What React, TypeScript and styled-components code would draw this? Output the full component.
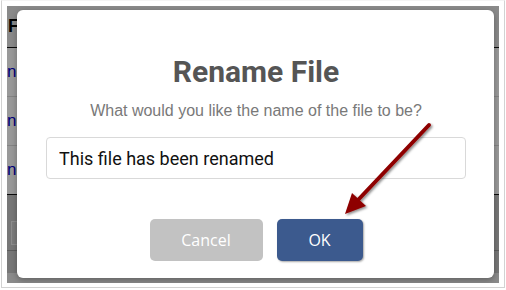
import React from 'react';
import styled, { createGlobalStyle } from 'styled-components';

const Global = createGlobalStyle`
  html, body { margin: 0; padding: 0; background: #ffffff; }
  body { width: 506px; height: 290px; overflow: hidden; }
  * { box-sizing: border-box; }
`;

const Frame = styled.div`
  position: relative;
  width: 506px;
  height: 290px;
  background: #ffffff;
  padding: 0 1px 2px 1px;
`;

const Shot = styled.div`
  width: 504px;
  height: 288px;
  border: 1px solid #d2d2d2;
  border-top-color: #f4f4f4;
  padding: 5px 4px 4px 5px;
`;

const Screen = styled.div`
  position: relative;
  width: 492px;
  height: 277px;
  overflow: hidden;
  background: #ffffff;
  display: flex;
  flex-direction: column;
`;

const TableHead = styled.div`
  height: 42px;
  flex: none;
  background: #e6e6e6;
  border-bottom: 1px solid #111;
  display: flex;
  align-items: center;
  padding-left: 1px;
  font: 700 18px "Liberation Sans", Arial, sans-serif;
  color: #000;
`;

const Row = styled.div<{ $last?: boolean }>`
  height: 49px;
  flex: none;
  border-bottom: 1px solid ${(p) => (p.$last ? '#111' : '#dddddd')};
  display: flex;
  align-items: center;
  font: 400 17px "Liberation Sans", Arial, sans-serif;
  color: #0000cc;
`;

const Footer = styled.div`
  flex: 1;
  background: #c6c6c6;
  display: flex;
  flex-direction: column;
`;

const FooterInput = styled.div`
  margin: 26px 0 0 4px;
  width: 200px;
  height: 24px;
  border: 1px solid #ececec;
  background: #cfcfcf;
`;

const FooterRule = styled.div`
  margin-top: 5px;
  height: 1px;
  background: #9a9a9a;
`;

const FooterBand = styled.div`
  margin-top: auto;
  height: 10px;
  background: #e8e8e8;
`;

const Overlay = styled.div`
  position: absolute;
  inset: 0;
  background: rgba(0, 0, 0, 0.4);
  padding: 4px 5px 5px 10px;
  display: flex;
`;

const Dialog = styled.div`
  width: 477px;
  height: 268px;
  background: #ffffff;
  border-radius: 6px;
  box-shadow: 0 2px 6px rgba(0, 0, 0, 0.3);
  padding: 46px 28px 17px 29px;
  display: flex;
  flex-direction: column;
  align-items: center;
`;

const Title = styled.h1`
  margin: 0;
  font: 700 30px/32px Roboto, "Liberation Sans", sans-serif;
  color: #555555;
`;

const Subtitle = styled.p`
  margin: 13px 0 0;
  font: 400 16px/20px "Liberation Sans", Arial, sans-serif;
  color: #797979;
`;

const NameInput = styled.input`
  margin-top: 16px;
  width: 420px;
  height: 42px;
  border: 1px solid #d9d9d9;
  border-radius: 4px;
  padding: 0 12px;
  font: 400 18px Roboto, "Liberation Sans", sans-serif;
  color: #111111;
  background: #ffffff;
  outline: none;
`;

const Buttons = styled.div`
  margin-top: 40px;
  display: flex;
  gap: 14px;
  justify-content: center;
`;

const Button = styled.button<{ $primary?: boolean; $width: number }>`
  width: ${(p) => p.$width}px;
  height: 42px;
  border: none;
  border-radius: 5px;
  padding: 0;
  font: 400 16px "Open Sans", "Liberation Sans", sans-serif;
  color: #ffffff;
  background: ${(p) => (p.$primary ? '#3c5a8e' : '#c2c2c2')};
  box-shadow: ${(p) => (p.$primary ? '1px 1px 2px rgba(0,0,0,0.35)' : 'none')};
  display: flex;
  align-items: center;
  justify-content: center;
`;

const ArrowLayer = styled.svg`
  position: absolute;
  left: 0;
  top: 0;
  pointer-events: none;
`;

export default function App() {
  return (
    <>
      <Global />
      <Frame>
        <Shot>
          <Screen>
            <TableHead>F</TableHead>
            <Row>nc</Row>
            <Row>nc</Row>
            <Row $last>nc</Row>
            <Footer>
              <FooterInput />
              <FooterRule />
              <FooterBand />
            </Footer>
            <Overlay>
              <Dialog>
                <Title>Rename File</Title>
                <Subtitle>What would you like the name of the file to be?</Subtitle>
                <NameInput defaultValue="This file has been renamed" />
                <Buttons>
                  <Button $width={113}>Cancel</Button>
                  <Button $primary $width={86}>OK</Button>
                </Buttons>
              </Dialog>
            </Overlay>
          </Screen>
        </Shot>
        <ArrowLayer width={506} height={290} viewBox="0 0 506 290">
          <defs>
            <filter id="sh" x="-20%" y="-20%" width="140%" height="140%">
              <feDropShadow dx="1.5" dy="1.5" stdDeviation="1.2" floodColor="#000" floodOpacity="0.45" />
            </filter>
          </defs>
          <g filter="url(#sh)">
            <line x1={429} y1={125} x2={358} y2={200} stroke="#8e0000" strokeWidth={4} strokeLinecap="round" />
            <polygon points="345,214 352,193 366,206" fill="#8e0000" />
          </g>
        </ArrowLayer>
      </Frame>
    </>
  );
}
